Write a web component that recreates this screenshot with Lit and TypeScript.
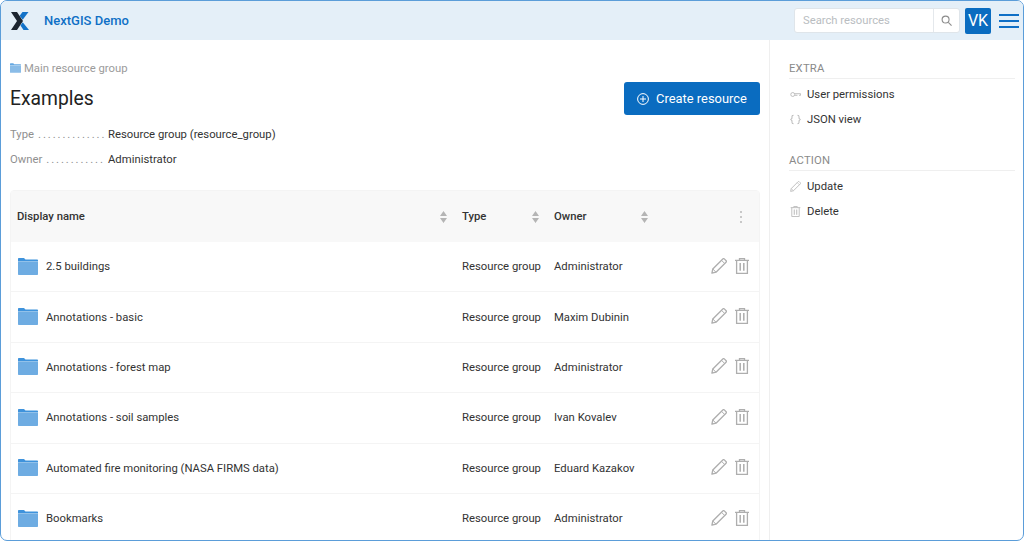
import { LitElement, html, css } from "lit";
import { customElement } from "lit/decorators.js";

const rows = [
  ["2.5 buildings", "Administrator"],
  ["Annotations - basic", "Maxim Dubinin"],
  ["Annotations - forest map", "Administrator"],
  ["Annotations - soil samples", "Ivan Kovalev"],
  ["Automated fire monitoring (NASA FIRMS data)", "Eduard Kazakov"],
  ["Bookmarks", "Administrator"],
];

const folder = (cls: string) => html`<svg class=${cls} viewBox="0 0 20 17">
  <path d="M0 1C0 .4.4 0 1 0H6L7.500 1.500H19c.6 0 1 .4 1 1V3H0Z" fill="#3f93dc"/>
  <path d="M0 3.300H20V16c0 .6-.4 1-1 1H1c-.6 0-1-.4-1-1Z" fill="#6eace2"/>
</svg>`;

const pencil = (cls: string) => html`<svg class=${cls} viewBox="0 0 16 16" fill="none" stroke="currentColor">
  <path d="M.9 15.100 1.800 11 11.800 1c.5-.5 1.100-.5 1.500-.1l1.800 1.800c.4.400.4 1-.1 1.500L5 14.200Z" stroke-width="1.300" stroke-linejoin="round"/>
  <path d="M1.800 11 5 14.200M10.500 2.300 13.700 5.500" stroke-width="1"/>
</svg>`;

const trash = (cls: string) => html`<svg class=${cls} viewBox="0 0 14 16" fill="none" stroke="currentColor" stroke-width="1.300">
  <path d="M0 2.400H14M4.500 2.400V.7H9.500V2.400"/>
  <path d="M1.600 2.400V15.300H12.400V2.400"/>
  <path d="M5.200 5V12.800M8.800 5V12.800" stroke-width="1.500"/>
</svg>`;

const sort = html`<svg class="sort" viewBox="0 0 7 12" fill="#b5b5b5"><path d="M3.500 0 7 5H0ZM0 7H7L3.500 12Z"/></svg>`;

@customElement("app-root")
export class AppRoot extends LitElement {
  static styles = css`
    :host {
      display: block;
      box-sizing: border-box;
      width: 1024px;
      height: 541px;
      border: 1px solid #5b9dd9;
      border-radius: 7px;
      overflow: hidden;
      background: #fff;
      font-family: Roboto, "Liberation Sans", sans-serif;
      font-size: 11.300px;
      color: #333;
    }
    .top {
      height: 39px;
      background: #e4eff8;
      display: flex;
      align-items: center;
      padding: 0 4px 0 10px;
    }
    .logo { width: 18px; height: 18px; margin-right: 15px; }
    .brand { font-size: 13px; font-weight: 500; color: #0f6fc6; flex: 1; }
    .search {
      width: 166px;
      height: 25px;
      box-sizing: border-box;
      display: flex;
      background: #fff;
      border: 1px solid #dfe5ea;
      border-radius: 3px;
    }
    .search span {
      flex: 1;
      padding-left: 8px;
      line-height: 23px;
      font-size: 11.250px;
      color: #b9bdc1;
    }
    .search b {
      width: 25px;
      border-left: 1px solid #e4e8ec;
      display: flex;
      align-items: center;
      justify-content: center;
    }
    .search svg { width: 11px; height: 11px; color: #8c8c8c; }
    .avatar {
      width: 26px;
      height: 26px;
      margin-left: 5px;
      background: #0a6cc0;
      color: #fff;
      border-radius: 2px;
      font-size: 16px;
      line-height: 26px;
      text-align: center;
    }
    .burger {
      width: 20px;
      height: 14px;
      margin-left: 8px;
      display: flex;
      flex-direction: column;
      justify-content: space-between;
    }
    .burger i { display: block; height: 2px; background: #0f6fc6; }
    .body { display: flex; height: 500px; }
    .main { width: 768px; box-sizing: border-box; padding: 21px 9px 0 9px; flex: none; }
    .crumb { display: flex; align-items: center; gap: 3px; color: #9b9b9b; height: 14px; }
    .crumb-ico { width: 11px; height: 10px; opacity: .8; }
    .head { display: flex; justify-content: space-between; align-items: center; margin-top: 7px; height: 33px; }
    h1 { margin: 0; font-size: 19.300px; font-weight: 400; color: #222; }
    .btn {
      width: 136px;
      height: 33px;
      box-sizing: border-box;
      background: #0a6cc0;
      color: #fff;
      border-radius: 3px;
      display: flex;
      align-items: center;
      justify-content: center;
      gap: 7px;
      font-size: 12.900px;
    }
    .btn svg { width: 12px; height: 12px; }
    .metas { margin-top: 8px; }
    .meta {
      display: grid;
      grid-template-columns: 98px 1fr;
      height: 24.500px;
      line-height: 24.500px;
    }
    .label { display: flex; gap: 4px; color: #8f8f8f; overflow: hidden; }
    .dot { letter-spacing: 1.900px; white-space: nowrap; }
    .table { margin-top: 18px; border: 1px solid #f4f4f4; border-radius: 4px 4px 0 0; }
    .row {
      display: grid;
      grid-template-columns: 445px 92px 109px 1fr;
      height: 50.400px;
      align-items: center;
      border-bottom: 1px solid #f4f4f4;
      box-sizing: border-box;
    }
    .row.hd { background: #f8f8f8; height: 51px; border-bottom: none; font-weight: 500; }
    .cell { display: flex; align-items: center; padding-left: 6px; min-width: 0; }
    .cell.s { justify-content: space-between; padding-right: 9px; }
    .name { gap: 8px; padding-left: 7px; }
    .fld { width: 20px; height: 17px; flex: none; margin-top: -1px; }
    .sort { width: 7px; height: 12px; flex: none; }
    .acts { display: flex; justify-content: flex-end; align-items: center; gap: 8px; padding: 0 10px 2px 0; color: #aeaeae; }
    .acts .p { width: 16px; height: 16px; }
    .acts .t { width: 14px; height: 16px; }
    .dots { display: flex; flex-direction: column; gap: 3px; padding-right: 17px; align-items: flex-end; }
    .dots i { width: 2px; height: 2px; border-radius: 50%; background: #b8b8b8; display: block; }
    .side { flex: 1; border-left: 1px solid #efefef; padding: 22px 8px 0 19px; }
    .sh {
      color: #8a8a8a;
      border-bottom: 1px solid #efefef;
      height: 16px;
      line-height: 14px;
      letter-spacing: .2px;
    }
    .si { display: flex; align-items: center; height: 25.400px; gap: 6px; }
    .si svg { width: 11px; height: 11px; margin-left: 1px; color: #bbb; flex: none; }
    .items { margin-top: 2.500px; margin-bottom: 22px; }
  `;

  render() {
    return html`
      <div class="top">
        <svg class="logo" viewBox="0 0 18 18">
          <path d="M0 0H6L12 9 6 18H0L6 9Z" fill="#1c2530"/>
          <path d="M11.500 0H17.500L11.700 7.700 8.700 3.800Z" fill="#1372c8"/>
          <path d="M11.700 10.300 18 18H12.500L9.500 13.600Z" fill="#1372c8"/>
        </svg>
        <div class="brand">NextGIS Demo</div>
        <div class="search">
          <span>Search resources</span>
          <b><svg viewBox="0 0 12 12" fill="none" stroke="currentColor" stroke-width="1.200"><circle cx="5" cy="5" r="3.800"/><path d="M8 8 11.500 11.500"/></svg></b>
        </div>
        <div class="avatar">VK</div>
        <div class="burger"><i></i><i></i><i></i></div>
      </div>
      <div class="body">
        <div class="main">
          <div class="crumb">${folder("crumb-ico")}<span>Main resource group</span></div>
          <div class="head">
            <h1>Examples</h1>
            <div class="btn">
              <svg viewBox="0 0 12 12" fill="none" stroke="currentColor"><circle cx="6" cy="6" r="5.400"/><path d="M6 3V9M3 6H9"/></svg>
              Create resource
            </div>
          </div>
          <div class="metas">
            <div class="meta"><span class="label"><span>Type</span><span class="dot">..............</span></span><span>Resource group (resource_group)</span></div>
            <div class="meta"><span class="label"><span>Owner</span><span class="dot">............</span></span><span>Administrator</span></div>
          </div>
          <div class="table">
            <div class="row hd">
              <div class="cell s">Display name ${sort}</div>
              <div class="cell s">Type ${sort}</div>
              <div class="cell s">Owner ${sort}</div>
              <div class="dots"><i></i><i></i><i></i></div>
            </div>
            ${rows.map(
              ([n, o]) => html`<div class="row">
                <div class="cell name">${folder("fld")}<span>${n}</span></div>
                <div class="cell">Resource group</div>
                <div class="cell">${o}</div>
                <div class="acts">${pencil("p")}${trash("t")}</div>
              </div>`
            )}
          </div>
        </div>
        <div class="side">
          <div class="sh">EXTRA</div>
          <div class="items">
            <div class="si">
              <svg viewBox="0 0 14 14" fill="none" stroke="currentColor" stroke-width="1.200"><circle cx="3.500" cy="7" r="2.500"/><path d="M6 6H13.500V8H11.500M9.500 8H6.200"/></svg>
              <span>User permissions</span>
            </div>
            <div class="si">
              <svg viewBox="0 0 14 14" fill="none" stroke="currentColor" stroke-width="1.300"><path d="M4.500 1.500C3 1.500 2.500 2.200 2.500 3.500V5.500L1 7 2.500 8.500V10.500C2.500 11.800 3 12.500 4.500 12.500M9.500 1.500C11 1.500 11.500 2.200 11.500 3.500V5.500L13 7 11.500 8.500V10.500C11.500 11.800 11 12.500 9.500 12.500"/></svg>
              <span>JSON view</span>
            </div>
          </div>
          <div class="sh">ACTION</div>
          <div class="items">
            <div class="si">${pencil("")}<span>Update</span></div>
            <div class="si">${trash("")}<span>Delete</span></div>
          </div>
        </div>
      </div>
    `;
  }
}
